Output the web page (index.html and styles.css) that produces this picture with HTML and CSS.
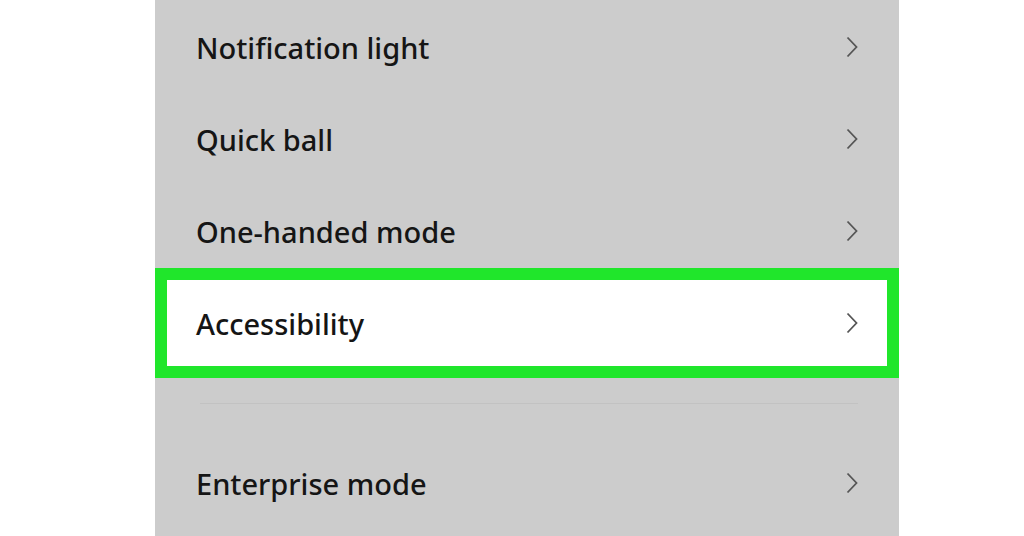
FILE: index.html
```html
<!DOCTYPE html>
<html>
<head>
<meta charset="utf-8">
<link rel="stylesheet" href="styles.css">
</head>
<body>
<div class="page">
  <div class="panel">
    <div class="row"><span class="label">Notification light</span><svg class="chev" viewBox="0 0 12 22"><path d="M1.5 1.5 L10.5 11 L1.5 20.5"/></svg></div>
    <div class="row"><span class="label">Quick ball</span><svg class="chev" viewBox="0 0 12 22"><path d="M1.5 1.5 L10.5 11 L1.5 20.5"/></svg></div>
    <div class="row"><span class="label">One-handed mode</span><svg class="chev" viewBox="0 0 12 22"><path d="M1.5 1.5 L10.5 11 L1.5 20.5"/></svg></div>
    <div class="row highlight"><span class="label">Accessibility</span><svg class="chev" viewBox="0 0 12 22"><path d="M1.5 1.5 L10.5 11 L1.5 20.5"/></svg></div>
    <div class="divider"></div>
    <div class="row last"><span class="label">Enterprise mode</span><svg class="chev" viewBox="0 0 12 22"><path d="M1.5 1.5 L10.5 11 L1.5 20.5"/></svg></div>
  </div>
</div>
</body>
</html>
```
FILE: styles.css
```css
html, body {
  margin: 0;
  padding: 0;
  background: #ffffff;
}
.page {
  width: 1024px;
  height: 536px;
  overflow: hidden;
  display: flex;
  justify-content: flex-start;
}
.panel {
  margin-left: 155px;
  width: 744px;
  height: 536px;
  background: #cccccc;
  display: flex;
  flex-direction: column;
  padding-top: 1px;
  box-sizing: border-box;
}
.row {
  height: 92px;
  display: flex;
  align-items: center;
  justify-content: space-between;
  padding: 0 41px 0 41px;
  box-sizing: border-box;
  flex-shrink: 0;
}
.label {
  font-family: "Noto Sans", sans-serif;
  font-size: 29px;
  font-weight: 500;
  color: #151515;
  letter-spacing: 0px;
}
.chev {
  width: 12px;
  height: 22px;
  fill: none;
  stroke: #555555;
  stroke-width: 1.8;
}
.row.highlight {
  height: 110px;
  margin-top: -9px;
  background: #ffffff;
  border: 12px solid #20e62b;
  padding: 0 29px 0 29px;
}
.divider {
  height: 1px;
  background: #c2c2c2;
  margin: 25px 41px 0 45px;
  flex-shrink: 0;
}
.row.last {
  height: 158px;
}
```
